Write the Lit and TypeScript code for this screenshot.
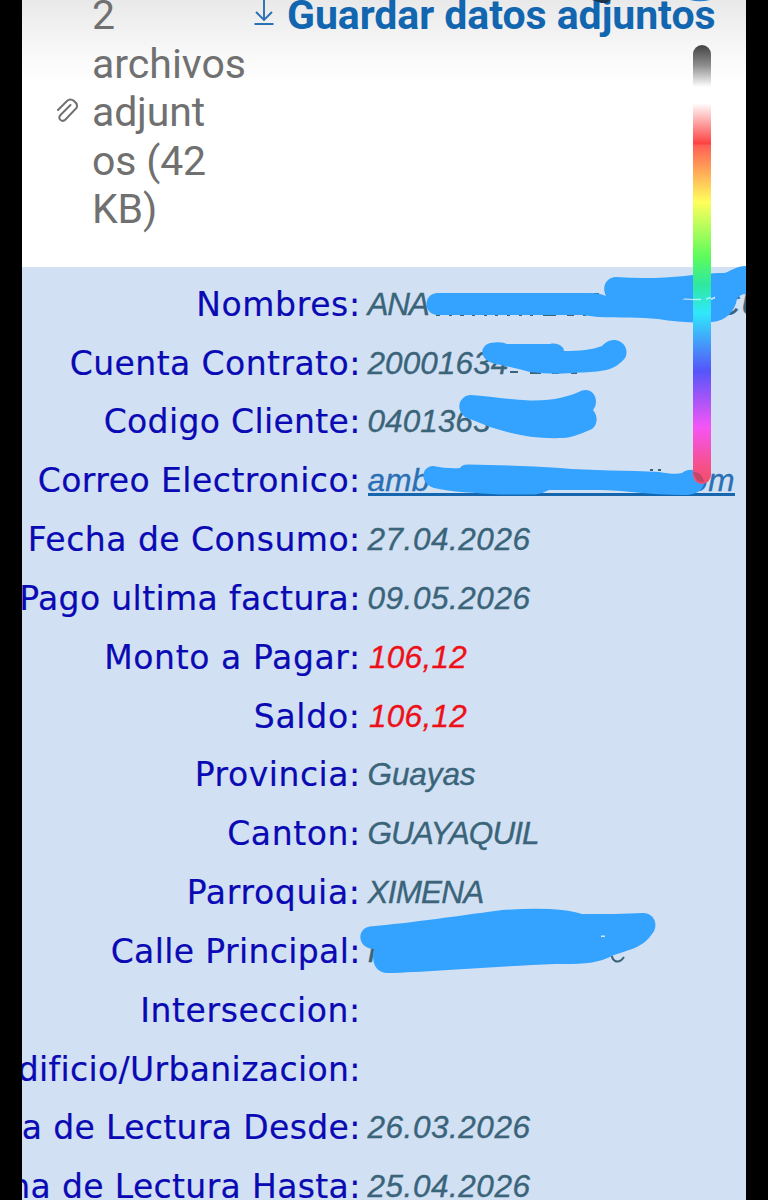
import { LitElement, html, svg, css } from "lit";
import { customElement } from "lit/decorators.js";

interface Piece { text: string; x: number; width: number; }
interface Row { label: string; labelWidth: number; values: Piece[]; kind?: string; }

const v = (text: string, width: number, x = 367.5): Piece => ({ text, x, width });

const ROWS: Row[] = [
  { label: "Nombres:", labelWidth: 164.5, values: [v("ANA", 61), v("CU", 48, 717)] },
  { label: "Cuenta Contrato:", labelWidth: 291, values: [v("20001634", 141)] },
  { label: "Codigo Cliente:", labelWidth: 257, values: [v("0401363", 123)] },
  { label: "Correo Electronico:", labelWidth: 323, values: [v("amb", 62), v("om", 45, 690)], kind: "mail" },
  { label: "Fecha de Consumo:", labelWidth: 333, values: [v("27.04.2026", 163)] },
  { label: "Pago ultima factura:", labelWidth: 341.5, values: [v("09.05.2026", 163)] },
  { label: "Monto a Pagar:", labelWidth: 256.5, values: [v("106,12", 98, 369)], kind: "due" },
  { label: "Saldo:", labelWidth: 107, values: [v("106,12", 98, 369)], kind: "due" },
  { label: "Provincia:", labelWidth: 166, values: [v("Guayas", 108)] },
  { label: "Canton:", labelWidth: 133.5, values: [v("GUAYAQUIL", 171)] },
  { label: "Parroquia:", labelWidth: 174, values: [v("XIMENA", 116)] },
  { label: "Calle Principal:", labelWidth: 250, values: [v("I", 9)] },
  { label: "Interseccion:", labelWidth: 220.5, values: [] },
  { label: "dificio/Urbanizacion:", labelWidth: 343, values: [] },
  { label: "a de Lectura Desde:", labelWidth: 339, values: [v("26.03.2026", 163)] },
  { label: "ha de Lectura Hasta:", labelWidth: 351.5, values: [v("25.04.2026", 163)] },
];

/** One line of text, tracked so that its advance equals `width`. */
@customElement("fit-text")
class FitText extends LitElement {
  static properties = { text: {}, width: { type: Number } };
  declare text: string;
  declare width: number;
  static styles = css`
    :host { display: inline-block; white-space: pre; }
  `;
  firstUpdated() {
    const el = this.renderRoot.querySelector("span") as HTMLElement;
    const natural = el.getBoundingClientRect().width;
    const gap = (this.width - natural) / this.text.length;
    el.style.letterSpacing = `${gap.toFixed(3)}px`;
  }
  render() {
    return html`<span>${this.text}</span>`;
  }
}

@customElement("app-root")
class AppRoot extends LitElement {
  static styles = css`
    :host {
      display: block; position: relative; box-sizing: border-box;
      width: 768px; height: 1200px; padding: 0 22px;
      background: #000; overflow: hidden;
    }
    .screen { width: 724px; height: 1200px; overflow: hidden; background: #d2e0f3; }
    .head {
      display: flex; box-sizing: border-box; height: 267px; overflow: hidden;
      background: linear-gradient(#e9e9e9 0, #f1f1f1 28px, #f9f9f9 55px, #fff 84px);
      font-family: Roboto, sans-serif; font-size: 41px; line-height: 48.6px; color: #707070;
    }
    .clip { flex: none; width: 26px; height: 28px; margin: 97px 0 0 33px; }
    .files { display: flex; flex-direction: column; align-items: flex-start; width: 152px; margin: -9px 0 0 11px; }
    .save { display: flex; margin: -9px 0 0 9px; color: #1266b0; font-weight: 700; }
    .down { flex: none; width: 22px; height: 28px; margin: 8px 12px 0 0; }
    .rows {
      padding-top: 7.8px; font-size: 33px; line-height: 58.83px;
      font-family: "DejaVu Sans", Verdana, sans-serif; color: #0a0ab4;
    }
    .row { display: grid; grid-template-columns: 340px 1fr; height: 58.83px; align-items: start; }
    .label {
      display: flex; justify-content: flex-end; white-space: nowrap;
      padding: 1px 1.3px 0 0; -webkit-text-stroke: 0.2px;
    }
    .values {
      display: grid; font-family: "Liberation Sans", Arial, sans-serif;
      font-size: 31.5px; font-style: italic; color: #3a6479; -webkit-text-stroke: 0.35px;
    }
    .piece { grid-area: 1 / 1; white-space: nowrap; width: 0; }
    .due { color: #ee1018; }
    .mail { color: #2a70b4; position: relative; }
    .rule { position: absolute; left: 6px; top: 42px; width: 367px; height: 3px; background: #1566ad; }
    .ink { position: absolute; left: 22px; top: 0; width: 724px; height: 1200px; }
    .hues {
      position: absolute; left: 692.5px; top: 45px; width: 18.5px; height: 439px; border-radius: 9.5px;
      background: linear-gradient(
        #424242 0, #8c8c8c 20px, #fff 42px, #fff 58px, #fd4040 99px, #ff5e54 100px,
        #ffff5c 157px, #5cfb5c 212px, #2fe8a0 240px, #30e8fa 268px, #5555fa 326px,
        #f555f5 382px, #f6508c 420px, #f24d68 439px);
    }
  `;

  render() {
    return html`
      <div class="screen">
        <div class="head">
          <svg class="clip" viewBox="55 97 26 28" fill="none" stroke="#707070" stroke-width="2" stroke-linecap="round">
            <path d="M58 110 L67 101 C71 97 79 103 76.500 108 L65.500 119.500 C62 123 57 118.500 60.500 115 L70.500 105" />
          </svg>
          <div class="files">
            <fit-text .text=${"2"} .width=${24}></fit-text>
            <fit-text .text=${"archivos"} .width=${154}></fit-text>
            <fit-text .text=${"adjunt"} .width=${113}></fit-text>
            <fit-text .text=${"os (42"} .width=${114}></fit-text>
            <fit-text .text=${"KB)"} .width=${65}></fit-text>
          </div>
          <div class="save">
            <svg class="down" viewBox="253 -1 22 28" fill="none" stroke="#2a70b4" stroke-width="1.9">
              <path d="M264 -1 V20 M256 12 L264 20 L272 12 M254.500 24 H273.500" />
            </svg>
            <fit-text .text=${"Guardar datos adjuntos"} .width=${428.5}></fit-text>
          </div>
        </div>
        <div class="rows">
          ${ROWS.map((r) => html`
            <div class="row">
              <div class="label"><fit-text .text=${r.label} .width=${r.labelWidth}></fit-text></div>
              <div class="values ${r.kind ?? ""}">
                ${r.values.map((p) => html`<div class="piece" style="margin-left:${p.x - 362}px"><fit-text .text=${p.text} .width=${p.width}></fit-text></div>`)}
                ${r.kind === "mail" ? html`<div class="rule"></div>` : ""}
              </div>
            </div>`)}
        </div>
      </div>
      <svg class="ink" viewBox="22 0 724 1200">${svg`
        <path fill="#2a80d0" d="M690 0 Q700 2.500 710 0Z" />
        <path fill="#1b3550" d="M592 0 H611 L607 3 H601Z" />
        <g stroke="#3a6479" stroke-width="2">
          <path d="M436 315 h4 M449 315 h3 M460 315 h4 M472 315 h3 M484 315 h3 M495 315 h3 M507 315 h3 M519 315 h3 M530 315 h3 M543 315 h13 M567 315 h7 M583 315 h3 M590 315 h4 M593 294 h6" />
          <path d="M510 372 h8 M530 373 h11 M552 373 h7 M571 373 h6" />
          <path d="M650 470 h3 M658 470 h3 M624 957 q-4 6 -9 4 q-3 -2 -3 -5" fill="none" />
        </g>
        <g fill="#33a3ff">
          <path d="M437 293 H590 Q600 293 606 296 C601 286 607 277 616 277 C640 279 665 278 685 276 C700 274 710 273 724 273 C730 272 735 266 746 266 V294 Q740 294 737 299 C735 311 726 321 712 322 C695 323 675 322 658 319 C640 317 620 318 598 317 L582 315 H437 C423 314 423 294 437 293Z" />
          <path d="M490 343 Q502 341 507 344 H550 C558 342 564 347 564 351 C580 351 592 350 602 346 C606 342 609 340 615 340 C625 341 629 351 625 358 C615 371 600 372 580 372.500 Q555 375 530 372 Q515 368 496 364 C480 361 478 347 490 343Z" />
          <path d="M470 395 C490 396 510 400 530 400.500 C553 401 568 397 582 390.500 C594 387 600 401 593 410 C598 416 598 424 592 429 Q572 438 563 438 C535 439 515 435 490 427 L465 417 C455 410 459 396 470 395Z" />
          <path d="M433 466 Q448 469 460 468 Q462 464 469 464.500 C495 465 530 466 560 468 C590 471 630 470 659 472 Q675 475 682 473 C690 467 700 470 703 478 C707 489 697 495 684 495 C650 495 620 490 600 490 H549 Q542 494 535 494.500 H500 C477 493 450 492 434 488 C420 484 420 467 433 466Z" />
          <path d="M370 926.500 C410 923 465 915 495 911 Q520 908 550 909 Q570 910 582 914 C605 914 625 914 643 913 C655 913 659 926 652 934 C643 947 632 949 614 955 C595 965 578 964 555 964 C500 966 430 972 388 973 C375 973 371 961 374 949 C356 948 357 928 370 926.500Z" />
        </g>
        <g fill="#cfe6fb">
          <path d="M682 299.500 L685 298.500 L694 299 L693 300Z M710 299 L715 296.500 V298.500 L711 300Z M601 935.500 h4 v1.500 h-4Z" />
        </g>`}
      </svg>
      <div class="hues"></div>
      <svg class="ink" viewBox="22 0 724 1200">
        <path fill="#a33f68" opacity=".6" d="M693 472 Q702 471 704 482 Q696 483 693 472Z" />
        <path stroke="#a8f4f4" stroke-width="1.5" d="M693 299.500 H701 M706 299 L711 297.500" />
      </svg>
    `;
  }
}
